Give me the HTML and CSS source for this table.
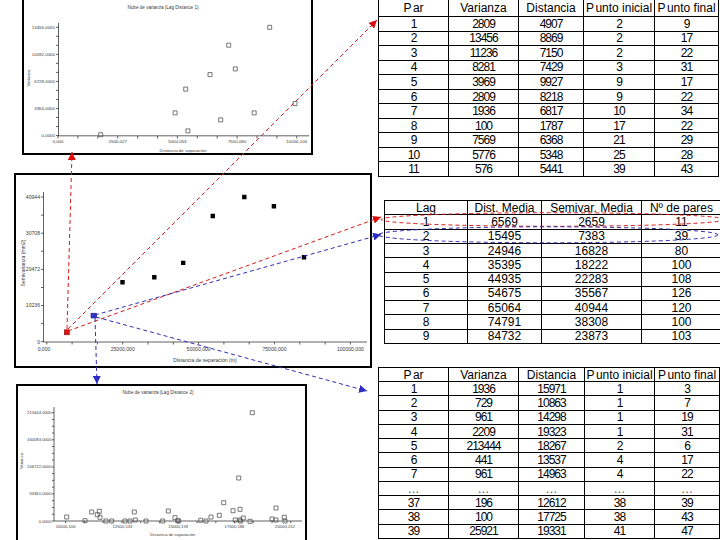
FILE: index.html
```html
<!DOCTYPE html>
<html lang="es">
<head>
<meta charset="utf-8">
<title>Semivariograma</title>
<link rel="stylesheet" href="styles.css">
</head>
<body>
<div class="page">
  <div class="col-left">
    <figure class="chart chart-cloud1">
      <svg width="287" height="161" viewBox="24 -8 287 161">
        <text class="ttl" x="163" y="8.6" text-anchor="middle">Nube de varianza (Lag Distance 1)</text>
        <path class="axis" d="M58.5 23V136M58 135.8H309"/>
        <path class="axis" d="M56 27.3h2.5M56 36.3h2.5M56 45.3h2.5M56 54.4h2.5M56 63.4h2.5M56 72.4h2.5M56 81.4h2.5M56 90.4h2.5M56 99.5h2.5M56 108.5h2.5M56 117.5h2.5M56 126.5h2.5M56 135.5h2.5M58 136v2.5M77.9 136v2.5M97.8 136v2.5M117.7 136v2.5M137.6 136v2.5M157.5 136v2.5M177.4 136v2.5M197.3 136v2.5M217.2 136v2.5M237.1 136v2.5M257 136v2.5M276.9 136v2.5M296.8 136v2.5"/>
        <g class="lbl" text-anchor="end">
          <text x="55" y="29">13456,0000</text>
          <text x="55" y="56">10092,0000</text>
          <text x="55" y="83.1">6728,0000</text>
          <text x="55" y="110.2">3364,0000</text>
          <text x="55" y="137.2">0,0000</text>
        </g>
        <g class="lbl" text-anchor="middle">
          <text x="58" y="143">0,000</text>
          <text x="117.7" y="143">2500,027</text>
          <text x="177.4" y="143">5000,053</text>
          <text x="237.1" y="143">7500,080</text>
          <text x="296.7" y="143">10000,106</text>
          <text x="183" y="152">Distancia de separación</text>
        </g>
        <text class="lbl" transform="translate(29.5 78) rotate(-90)" text-anchor="middle">Varianza</text>
        <path class="pts" d="M173.1 110.9h4v4h-4zM267.7 25.3h4v4h-4zM226.7 43.2h4v4h-4zM233.3 66.9h4v4h-4zM293 101.6h4v4h-4zM252.2 110.9h4v4h-4zM218.7 117.9h4v4h-4zM98.7 132.7h4v4h-4zM208 72.6h4v4h-4zM183.7 87.1h4v4h-4zM185.9 128.9h4v4h-4z"/>
      </svg>
    </figure>
    <figure class="chart chart-semivar">
      <svg width="354" height="191" viewBox="16 175 354 191">
        <path class="axis" d="M43.5 192V342M43.5 342H367"/>
        <path class="axis" d="M41 197h2.5M41 215.1h2.5M41 233.2h2.5M41 251.3h2.5M41 269.4h2.5M41 287.5h2.5M41 305.5h2.5M41 323.6h2.5M41 341.7h2.5M46.8 342v2.5M72.1 342v2.5M97.4 342v2.5M122.7 342v2.5M148 342v2.5M173.3 342v2.5M198.6 342v2.5M223.9 342v2.5M249.2 342v2.5M274.5 342v2.5M299.8 342v2.5M325.1 342v2.5M350.4 342v2.5"/>
        <g class="lbl2" text-anchor="end">
          <text x="40" y="198.8">40944</text>
          <text x="40" y="235">30708</text>
          <text x="40" y="271.2">20472</text>
          <text x="40" y="307.3">10236</text>
          <text x="40" y="343.5">0</text>
        </g>
        <g class="lbl2" text-anchor="middle">
          <text x="44" y="350.8">0,000</text>
          <text x="122.7" y="350.8">25000,000</text>
          <text x="198.6" y="350.8">50000,000</text>
          <text x="274.5" y="350.8">75000,000</text>
          <text x="350.4" y="350.8">100000,000</text>
          <text x="205" y="361.6">Distancia de separación (m)</text>
        </g>
        <text class="lbl2" transform="translate(24.5 263) rotate(-90)" text-anchor="middle">Semivarianza (mm2)</text>
        <path class="dots" d="M120.3 280h4.4v4.4h-4.4zM152.1 275.1h4.4v4.4h-4.4zM181 260.7h4.4v4.4h-4.4zM210.6 213.8h4.4v4.4h-4.4zM242.1 194.8h4.4v4.4h-4.4zM271.7 204.1h4.4v4.4h-4.4zM301.8 255.1h4.4v4.4h-4.4z"/>
        <rect class="mk-red" x="64.3" y="329.8" width="5" height="5"/>
        <rect class="mk-blue" x="91" y="313.2" width="5.6" height="4.8"/>
      </svg>
    </figure>
    <figure class="chart chart-cloud2">
      <svg width="287" height="166" viewBox="18 386 287 166">
        <text class="ttl" x="158" y="393.6" text-anchor="middle">Nube de varianza (Lag Distance 2)</text>
        <path class="axis" d="M54 407V521M54 521H302"/>
        <path class="axis" d="M52 412.7h2M52 419.5h2M52 426.2h2M52 433h2M52 439.8h2M52 446.5h2M52 453.3h2M52 460.1h2M52 466.9h2M52 473.6h2M52 480.4h2M52 487.2h2M52 493.9h2M52 500.7h2M52 507.5h2M52 514.2h2M52 521h2M65.6 521v2.2M84.4 521v2.2M103.1 521v2.2M121.9 521v2.2M140.7 521v2.2M159.4 521v2.2M178.2 521v2.2M197 521v2.2M215.8 521v2.2M234.5 521v2.2M253.3 521v2.2M272.1 521v2.2M290.8 521v2.2"/>
        <g class="lbl3" text-anchor="end">
          <text x="51.5" y="414.2">213444,0000</text>
          <text x="51.5" y="441.3">160083,0000</text>
          <text x="51.5" y="468.3">106722,0000</text>
          <text x="51.5" y="495.4">53361,0000</text>
          <text x="51.5" y="522.5">0,0000</text>
        </g>
        <g class="lbl3" text-anchor="middle">
          <text x="65.6" y="527.6">10000,106</text>
          <text x="122.5" y="527.6">12500,133</text>
          <text x="178.2" y="527.6">15000,159</text>
          <text x="234.5" y="527.6">17500,186</text>
          <text x="285" y="527.6">20000,212</text>
          <text x="172.7" y="536">Distancia de separación</text>
        </g>
        <text class="lbl3" transform="translate(22.5 461) rotate(-90)" text-anchor="middle">Varianza</text>
        <path class="pts" d="M64.7 515h4v4h-4zM83 518.7h4v4h-4zM89.7 510h4v4h-4zM95.3 512.7h4v4h-4zM97.3 509.3h4v4h-4zM98 515.3h4v4h-4zM104 519h4v4h-4zM109.7 519h4v4h-4zM123 519h4v4h-4zM128 519h4v4h-4zM132.3 510h4v4h-4zM133.3 518h4v4h-4zM144 519h4v4h-4zM160.7 519h4v4h-4zM166.3 509h4v4h-4zM173 515.7h4v4h-4zM175.7 518.7h4v4h-4zM176.7 519h4v4h-4zM198.7 518.3h4v4h-4zM204 519h4v4h-4zM209 515h4v4h-4zM217.3 513.3h4v4h-4zM221.7 500.7h4v4h-4zM231 508.7h4v4h-4zM233.3 518h4v4h-4zM238 507.3h4v4h-4zM237.7 518h4v4h-4zM238.7 519h4v4h-4zM241.3 516h4v4h-4zM248 519.3h4v4h-4zM270 517h4v4h-4zM274 506h4v4h-4zM274 518h4v4h-4zM282.3 515.3h4v4h-4zM283 519h4v4h-4zM236.7 476h4v4h-4zM250.3 410.7h4v4h-4z"/>
      </svg>
    </figure>
  </div>

  <div class="col-right">
    <table class="grid grid-pairs grid-pairs1">
      <colgroup><col class="c70"><col class="c70"><col class="c65"><col class="c71"><col class="c64"></colgroup>
      <thead><tr><th><span class="kp">P</span>ar</th><th>Varianza</th><th>Distancia</th><th><span class="kp">P</span>unto inicial</th><th><span class="kp">P</span>unto final</th></tr></thead>
      <tbody>
        <tr><td>1</td><td>2809</td><td>4907</td><td>2</td><td>9</td></tr>
        <tr><td>2</td><td>13456</td><td>8869</td><td>2</td><td>17</td></tr>
        <tr><td>3</td><td>11236</td><td>7150</td><td>2</td><td>22</td></tr>
        <tr><td>4</td><td>8281</td><td>7429</td><td>3</td><td>31</td></tr>
        <tr><td>5</td><td>3969</td><td>9927</td><td>9</td><td>17</td></tr>
        <tr><td>6</td><td>2809</td><td>8218</td><td>9</td><td>22</td></tr>
        <tr><td>7</td><td>1936</td><td>6817</td><td>10</td><td>34</td></tr>
        <tr><td>8</td><td>100</td><td>1787</td><td>17</td><td>22</td></tr>
        <tr><td>9</td><td>7569</td><td>6368</td><td>21</td><td>29</td></tr>
        <tr><td>10</td><td>5776</td><td>5348</td><td>25</td><td>28</td></tr>
        <tr><td>11</td><td>576</td><td>5441</td><td>39</td><td>43</td></tr>
      </tbody>
    </table>

    <table class="grid grid-lags">
      <colgroup><col class="c83"><col class="c74"><col class="c100"><col class="c80"></colgroup>
      <thead><tr><th>Lag</th><th>Dist. Media</th><th>Semivar. Media</th><th>Nº de pares</th></tr></thead>
      <tbody>
        <tr><td>1</td><td>6569</td><td>2659</td><td>11</td></tr>
        <tr><td>2</td><td>15495</td><td>7383</td><td>39</td></tr>
        <tr><td>3</td><td>24946</td><td>16828</td><td>80</td></tr>
        <tr><td>4</td><td>35395</td><td>18222</td><td>100</td></tr>
        <tr><td>5</td><td>44935</td><td>22283</td><td>108</td></tr>
        <tr><td>6</td><td>54675</td><td>35567</td><td>126</td></tr>
        <tr><td>7</td><td>65064</td><td>40944</td><td>120</td></tr>
        <tr><td>8</td><td>74791</td><td>38308</td><td>100</td></tr>
        <tr><td>9</td><td>84732</td><td>23873</td><td>103</td></tr>
      </tbody>
    </table>

    <table class="grid grid-pairs grid-pairs2">
      <colgroup><col class="c70"><col class="c70"><col class="c66"><col class="c70"><col class="c65"></colgroup>
      <thead><tr><th><span class="kp">P</span>ar</th><th>Varianza</th><th>Distancia</th><th><span class="kp">P</span>unto inicial</th><th><span class="kp">P</span>unto final</th></tr></thead>
      <tbody>
        <tr><td>1</td><td>1936</td><td>15971</td><td>1</td><td>3</td></tr>
        <tr><td>2</td><td>729</td><td>10863</td><td>1</td><td>7</td></tr>
        <tr><td>3</td><td>961</td><td>14298</td><td>1</td><td>19</td></tr>
        <tr><td>4</td><td>2209</td><td>19323</td><td>1</td><td>31</td></tr>
        <tr><td>5</td><td>213444</td><td>18267</td><td>2</td><td>6</td></tr>
        <tr><td>6</td><td>441</td><td>13537</td><td>4</td><td>17</td></tr>
        <tr><td>7</td><td>961</td><td>14963</td><td>4</td><td>22</td></tr>
        <tr class="gap"><td>…</td><td>…</td><td>…</td><td>…</td><td>…</td></tr>
        <tr><td>37</td><td>196</td><td>12612</td><td>38</td><td>39</td></tr>
        <tr><td>38</td><td>100</td><td>17725</td><td>38</td><td>43</td></tr>
        <tr><td>39</td><td>25921</td><td>19331</td><td>41</td><td>47</td></tr>
      </tbody>
    </table>
  </div>

  <svg class="links" width="720" height="540" viewBox="0 0 720 540">
    <defs>
      <marker id="ah-red" markerUnits="userSpaceOnUse" markerWidth="9" markerHeight="8" refX="8" refY="4" orient="auto">
        <path class="head-red" d="M0 0L8 4L0 8z"/>
      </marker>
      <marker id="ah-blue" markerUnits="userSpaceOnUse" markerWidth="9" markerHeight="8" refX="8" refY="4" orient="auto">
        <path class="head-blue" d="M0 0L8 4L0 8z"/>
      </marker>
    </defs>
    <g class="link-red">
      <path class="ln" d="M68 329L377 20" marker-end="url(#ah-red)"/>
      <path class="ln" d="M67 329L72 152" marker-end="url(#ah-red)"/>
      <path class="ln" d="M68 331L381 217" marker-end="url(#ah-red)"/>
      <ellipse class="ln" cx="553" cy="219.5" rx="172" ry="6.8"/>
    </g>
    <g class="link-blue">
      <path class="ln" d="M95 315L381 234.5" marker-end="url(#ah-blue)"/>
      <path class="ln" d="M95 318L97 384" marker-end="url(#ah-blue)"/>
      <path class="ln" d="M96 317L367 391" marker-end="url(#ah-blue)"/>
      <ellipse class="ln" cx="548" cy="234.8" rx="170" ry="8"/>
    </g>
  </svg>
</div>
</body>
</html>
```

FILE: styles.css
```css
html, body {
  margin: 0;
  padding: 0;
}

body {
  width: 720px;
  height: 540px;
  overflow: hidden;
  background: #ffffff;
  font-family: "Liberation Sans", Arial, sans-serif;
  color: #000000;
}

.page {
  position: relative;
  display: flex;
  width: 720px;
  height: 540px;
  overflow: hidden;
}

/* ---------- left column: charts ---------- */
.col-left {
  flex: none;
  width: 378px;
  display: flex;
  flex-direction: column;
  align-items: flex-start;
}

.chart {
  flex: none;
  margin: 0;
  box-sizing: border-box;
  border: 2px solid #000000;
  background: #ffffff;
}

.chart svg {
  display: block;
}

.chart-cloud1 {
  width: 291px;
  height: 165px;
  margin: -10px 0 0 22px;
}

.chart-semivar {
  width: 358px;
  height: 195px;
  margin: 18px 0 0 14px;
}

.chart-cloud2 {
  width: 291px;
  height: 170px;
  margin: 16px 0 0 16px;
}

.axis {
  fill: none;
  stroke: #3a3a3a;
  stroke-width: 0.8;
}

.ttl,
.lbl,
.lbl2,
.lbl3 {
  font-family: "Liberation Sans", Arial, sans-serif;
  fill: #3a3a3a;
}

.ttl {
  font-size: 4.6px;
}

.lbl {
  font-size: 4.4px;
}

.lbl2 {
  font-size: 5.1px;
}

.lbl3 {
  font-size: 4.2px;
}

.pts {
  fill: none;
  stroke: #555555;
  stroke-width: 0.8;
}

.dots {
  fill: #000000;
}

.mk-red {
  fill: #e01010;
  stroke: #801010;
  stroke-width: 0.6;
}

.mk-blue {
  fill: #3434c8;
  stroke: #202080;
  stroke-width: 0.6;
}

/* ---------- right column: tables ---------- */
.col-right {
  flex: none;
  display: flex;
  flex-direction: column;
  align-items: flex-start;
}

.grid {
  flex: none;
  border-collapse: collapse;
  table-layout: fixed;
  font-size: 12px;
  line-height: 12px;
  background: #ffffff;
}

.grid th,
.grid td {
  border: 1px solid #000000;
  padding: 0;
  text-align: center;
  vertical-align: middle;
  font-weight: normal;
  white-space: nowrap;
  overflow: hidden;
}

.grid-pairs td {
  letter-spacing: -1px;
}

.kp {
  margin-right: 1.5px;
}

.c64 { width: 64px; }
.c65 { width: 65px; }
.c66 { width: 66px; }
.c70 { width: 70px; }
.c71 { width: 71px; }
.c74 { width: 74px; }
.c80 { width: 80px; }
.c83 { width: 83px; }
.c100 { width: 100px; }

.grid-pairs1 {
  width: 340px;
  margin-top: -1px;
}

.grid-pairs1 thead tr {
  height: 17px;
}

.grid-pairs1 tbody tr {
  height: 14.55px;
}

.grid-lags {
  width: 337px;
  margin: 23px 0 0 6px;
}

.grid-lags tr {
  height: 14.3px;
}

.grid-pairs2 {
  width: 341px;
  margin-top: 23px;
}

.grid-pairs2 tr {
  height: 14.25px;
}

.grid-pairs2 .gap td {
  color: #5a5a5a;
  letter-spacing: 0;
}

/* ---------- overlay: dashed links between charts and tables ---------- */
.links {
  position: absolute;
  left: 0;
  top: 0;
  pointer-events: none;
}

.ln {
  fill: none;
  stroke-width: 1;
  stroke-dasharray: 4 3;
}

.link-red .ln {
  stroke: #d81818;
}

.link-blue .ln {
  stroke: #3030b4;
}

.head-red {
  fill: #e00c0c;
}

.head-blue {
  fill: #2c2cc4;
}
```
